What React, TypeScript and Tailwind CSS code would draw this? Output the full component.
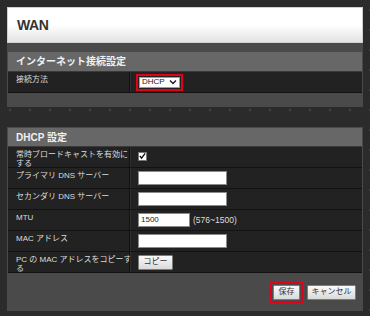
import { ReactNode } from 'react'

const font = { fontFamily: "'Liberation Sans', 'Noto Sans CJK JP', sans-serif" }

function Row({ label, children }: { label: ReactNode; children?: ReactNode }) {
  return (
    <div className="flex h-[21px] bg-[#222222] border-b border-[#121212]">
      <div className="w-[122px] shrink-0 border-r border-[#111] pl-[8px] pt-[3px] text-[8px] leading-[9px] text-[#dcdcdc]">
        {label}
      </div>
      <div className="flex items-center pl-[7px] border-l border-[#2e2e2e]">{children}</div>
    </div>
  )
}

function TextBox({ w, value }: { w: string; value?: string }) {
  return (
    <div className={`${w} h-[14px] bg-white border border-[#8a8a8a] text-[8px] leading-[12px] text-[#222] pl-[2px]`}>
      {value}
    </div>
  )
}

function Btn({ children, w }: { children: ReactNode; w: string }) {
  return (
    <div className={`${w} h-[15px] flex items-center justify-center border border-[#7c7c7c] bg-gradient-to-b from-[#fafafa] to-[#d9d9d9] text-[8px] text-[#333] rounded-[1px]`}>
      {children}
    </div>
  )
}

export default function App() {
  return (
    <div
      style={font}
      className="w-[370px] h-[316px] overflow-hidden bg-[#2b2b2b] bg-[radial-gradient(circle,#454545_0.7px,transparent_1px)] bg-[length:20px_20px] pt-[7px] pl-[7px]"
    >
      {/* Title */}
      <div className="w-[356px] h-[36px] flex items-center pl-[9px] border border-[#d0d0d0] bg-gradient-to-b from-white via-white to-[#e3e3e3]">
        <span className="text-[14px] font-bold text-[#333] tracking-tight">WAN</span>
      </div>

      {/* Internet connection */}
      <div className="w-[356px] bg-[#4a4a4a] pt-[9px] pb-[14px] px-[1px]">
        <div className="h-[20px] bg-[#676767] flex items-center pl-[8px] text-[10px] font-bold text-[#f0f0f0] border-b border-[#3a3a3a]">
          インターネット接続設定
        </div>
        <Row label="接続方法">
          <div className="-ml-[2px] border-2 border-[#e3001b] p-[1px]">
            <div className="w-[41px] h-[11px] bg-white border border-[#9a9a9a] flex items-center justify-between px-[2px]">
              <span className="text-[8px] leading-none text-[#222]">DHCP</span>
              <svg width="8" height="6" viewBox="0 0 8 6">
                <path d="M1 1.5 L4 4.5 L7 1.5" fill="none" stroke="#222" strokeWidth="1.5" />
              </svg>
            </div>
          </div>
        </Row>
      </div>

      {/* DHCP settings */}
      <div className="w-[356px] mt-[20px] bg-[#4a4a4a] pt-[1px] px-[1px]">
        <div className="h-[19px] bg-[#676767] flex items-center pl-[8px] text-[10px] font-bold text-[#f0f0f0] border-b border-[#3a3a3a]">
          DHCP 設定
        </div>
        <Row label={<>常時ブロードキャストを有効に<br />する</>}>
          <div className="w-[9px] h-[9px] bg-white border border-[#777] flex items-center justify-center -mt-[2px]">
            <svg width="8" height="8" viewBox="0 0 8 8">
              <path d="M1 4 L3 6.5 L7 1" fill="none" stroke="#111" strokeWidth="1.6" />
            </svg>
          </div>
        </Row>
        <Row label="プライマリ DNS サーバー">
          <TextBox w="w-[89px]" />
        </Row>
        <Row label="セカンダリ DNS サーバー">
          <TextBox w="w-[89px]" />
        </Row>
        <Row label="MTU">
          <TextBox w="w-[52px]" value="1500" />
          <span className="ml-[3px] text-[8.5px] text-[#dcdcdc]">(576~1500)</span>
        </Row>
        <Row label="MAC アドレス">
          <TextBox w="w-[89px]" />
        </Row>
        <Row label={<span className="whitespace-nowrap">PC の MAC アドレスをコピーす<br />る</span>}>
          <Btn w="w-[35px]">コピー</Btn>
        </Row>
        <div className="h-[38px] flex items-center justify-end gap-[4px] pr-[6px]">
          <div className="border-2 border-[#e3001b] p-[1px]">
            <Btn w="w-[27px]">保存</Btn>
          </div>
          <Btn w="w-[49px]">キャンセル</Btn>
        </div>
      </div>
    </div>
  )
}
